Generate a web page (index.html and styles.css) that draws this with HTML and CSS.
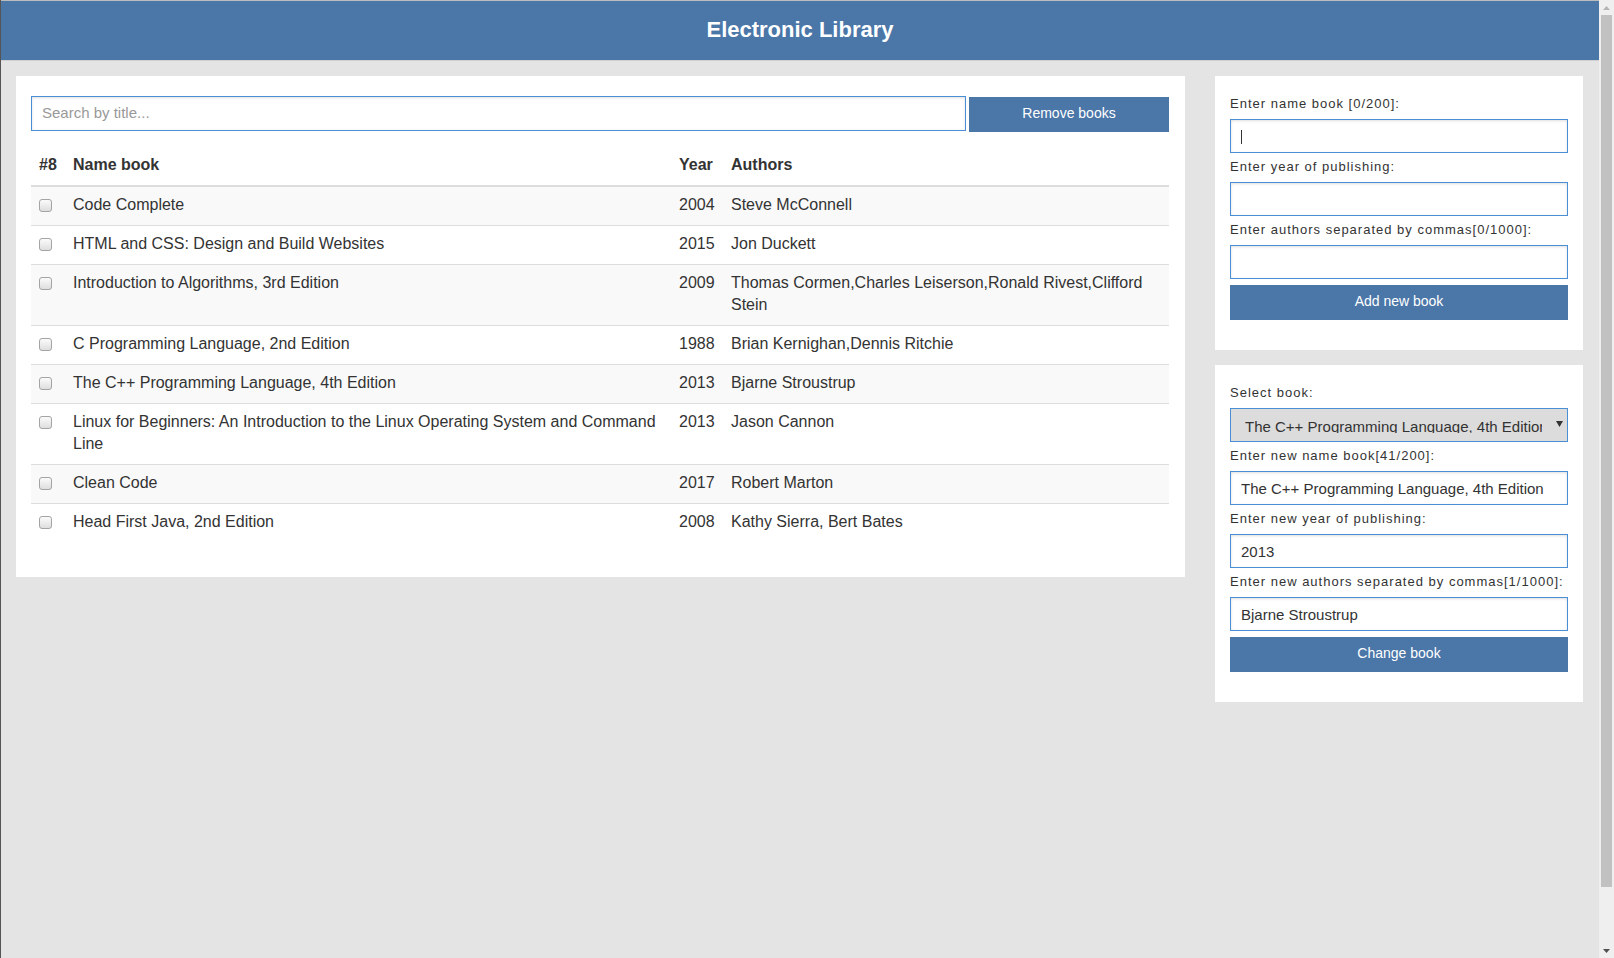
FILE: index.html
```html
<!DOCTYPE html>
<html lang="en">
<head>
<meta charset="utf-8">
<title>Electronic Library</title>
<link rel="stylesheet" href="styles.css">
</head>
<body>
<div class="app">
  <div class="page">
    <header class="topbar">
      <h1 class="title">Electronic Library</h1>
    </header>
    <main class="main">
      <section class="card books">
        <div class="search-row">
          <input class="field search" type="text" placeholder="Search by title...">
          <button class="btn remove" type="button">Remove books</button>
        </div>
        <table class="table">
          <colgroup>
            <col class="c-check">
            <col class="c-name">
            <col class="c-year">
            <col>
          </colgroup>
          <thead>
            <tr><th>#8</th><th>Name book</th><th>Year</th><th>Authors</th></tr>
          </thead>
          <tbody>
            <tr><td><input class="check" type="checkbox"></td><td>Code Complete</td><td>2004</td><td>Steve McConnell</td></tr>
            <tr><td><input class="check" type="checkbox"></td><td>HTML and CSS: Design and Build Websites</td><td>2015</td><td>Jon Duckett</td></tr>
            <tr><td><input class="check" type="checkbox"></td><td>Introduction to Algorithms, 3rd Edition</td><td>2009</td><td>Thomas Cormen,Charles Leiserson,Ronald Rivest,Clifford Stein</td></tr>
            <tr><td><input class="check" type="checkbox"></td><td>C Programming Language, 2nd Edition</td><td>1988</td><td>Brian Kernighan,Dennis Ritchie</td></tr>
            <tr><td><input class="check" type="checkbox"></td><td>The C++ Programming Language, 4th Edition</td><td>2013</td><td>Bjarne Stroustrup</td></tr>
            <tr><td><input class="check" type="checkbox"></td><td>Linux for Beginners: An Introduction to the Linux Operating System and Command Line</td><td>2013</td><td>Jason Cannon</td></tr>
            <tr><td><input class="check" type="checkbox"></td><td>Clean Code</td><td>2017</td><td>Robert Marton</td></tr>
            <tr><td><input class="check" type="checkbox"></td><td>Head First Java, 2nd Edition</td><td>2008</td><td>Kathy Sierra, Bert Bates</td></tr>
          </tbody>
        </table>
      </section>

      <aside class="side">
        <form class="card form">
          <label class="label">Enter name book [0/200]:</label>
          <span class="caret-wrap">
            <input class="field" type="text">
            <span class="caret"></span>
          </span>
          <label class="label">Enter year of publishing:</label>
          <input class="field" type="text">
          <label class="label">Enter authors separated by commas[0/1000]:</label>
          <input class="field" type="text">
          <button class="btn wide" type="button">Add new book</button>
        </form>

        <form class="card form">
          <label class="label">Select book:</label>
          <div class="select">
            <span class="select-text">The C++ Programming Language, 4th Edition</span>
            <svg class="select-arrow" viewBox="0 0 7 6" width="7" height="6"><polygon points="0,0 7,0 3.5,6" fill="#333"/></svg>
          </div>
          <label class="label">Enter new name book[41/200]:</label>
          <input class="field" type="text" value="The C++ Programming Language, 4th Edition">
          <label class="label">Enter new year of publishing:</label>
          <input class="field" type="text" value="2013">
          <label class="label">Enter new authors separated by commas[1/1000]:</label>
          <input class="field" type="text" value="Bjarne Stroustrup">
          <button class="btn wide" type="button">Change book</button>
        </form>
      </aside>
    </main>
  </div>

  <div class="scrollbar">
    <div class="sb-btn">
      <svg viewBox="0 0 7 4" width="7" height="4"><polygon points="0,4 7,4 3.5,0" fill="#b4b4b4"/></svg>
    </div>
    <div class="sb-track"><div class="sb-thumb"></div></div>
    <div class="sb-btn">
      <svg viewBox="0 0 7 4" width="7" height="4"><polygon points="0,0 7,0 3.5,4" fill="#505050"/></svg>
    </div>
  </div>
</div>
</body>
</html>
```

FILE: styles.css
```css
html, body {
  margin: 0;
  height: 100%;
  overflow: hidden;
}

body {
  font-family: "Liberation Sans", Arial, sans-serif;
  color: #333;
  background: #e4e4e4;
}

.app {
  display: flex;
  height: 100vh;
  border-left: 1px solid #555;
}

.page {
  flex: 1;
  min-width: 0;
  overflow: hidden;
  background: #e4e4e4;
}

/* header */
.topbar {
  height: 57px;
  padding-bottom: 2px;
  border-top: 1px solid #bcbcbc;
  border-bottom: 1px solid #d0d0d0;
  background: #4a76a8;
  display: flex;
  align-items: center;
  justify-content: center;
}

.title {
  margin: 0;
  font-size: 22px;
  line-height: 22px;
  font-weight: bold;
  color: #fff;
}

/* layout */
.main {
  display: grid;
  grid-template-columns: minmax(0, 1fr) 368px;
  column-gap: 30px;
  align-items: start;
  padding: 15px 16px 15px 15px;
}

.card {
  background: #fff;
}

.books {
  padding: 20px 16px 15px 15px;
}

.search-row {
  display: flex;
  align-items: flex-start;
  gap: 3px;
  margin-bottom: 15px;
}

.field {
  box-sizing: border-box;
  display: block;
  width: 100%;
  height: 34px;
  margin: 0;
  padding: 0 10px;
  border: 1px solid #4a8fd6;
  border-radius: 0;
  box-shadow: inset 0 1px 3px rgba(0, 0, 0, 0.13);
  background: #fff;
  font-family: "Liberation Sans", Arial, sans-serif;
  font-size: 15px;
  color: #333;
  outline: none;
}

.field::placeholder {
  color: #999;
}

.search {
  flex: 1;
  min-width: 0;
  height: 35px;
  padding-bottom: 2px;
}

.btn {
  display: block;
  box-sizing: border-box;
  height: 35px;
  margin: 0;
  padding: 0 0 3px;
  border: 0;
  border-radius: 0;
  background: #4a76a8;
  color: #fff;
  font-family: "Liberation Sans", Arial, sans-serif;
  font-size: 14px;
  cursor: pointer;
}

.remove {
  width: 200px;
  flex: none;
  margin-top: 1px;
}

/* table */
.table {
  width: 100%;
  margin-bottom: 20px;
  border-collapse: collapse;
  table-layout: fixed;
  font-size: 16px;
  line-height: 22px;
}

.c-check { width: 34px; }
.c-name { width: 606px; }
.c-year { width: 52px; }

.table th,
.table td {
  padding: 7px 8px 9px;
  text-align: left;
  vertical-align: top;
  border-top: 1px solid #ddd;
}

.table thead th {
  border-top: 0;
  border-bottom: 2px solid #ddd;
  font-weight: bold;
}

.table tbody tr:nth-child(odd) {
  background: #f9f9f9;
}

.check {
  -webkit-appearance: none;
  appearance: none;
  display: block;
  box-sizing: border-box;
  width: 13px;
  height: 13px;
  margin: 5px 0 0;
  border: 1px solid #a4a4a4;
  border-radius: 3px;
  background: linear-gradient(#fbfbfb, #dedede);
}

/* side forms */
.side {
  display: flex;
  flex-direction: column;
  gap: 15px;
}

.form {
  display: flex;
  flex-direction: column;
  padding: 14px 15px 15px;
}

.label {
  display: block;
  margin: 4px 0 6px;
  font-size: 13px;
  line-height: 19px;
  letter-spacing: 1px;
  color: #333;
}

.wide {
  width: 100%;
  margin: 6px 0 15px;
}

.caret-wrap {
  position: relative;
  display: block;
}

.caret {
  position: absolute;
  left: 11px;
  top: 11px;
  width: 1px;
  height: 14px;
  background: #333;
}

.select {
  box-sizing: border-box;
  display: flex;
  align-items: flex-start;
  height: 34px;
  padding: 8px 4px 0 14px;
  border: 1px solid #4a8fd6;
  background: #dcdcdc;
  font-size: 15px;
  color: #333;
}

.select-text {
  flex: 1;
  min-width: 0;
  height: 16px;
  line-height: 20px;
  overflow: hidden;
  white-space: nowrap;
}

.select-arrow {
  flex: none;
  margin: 4px 0 0 14px;
}

/* scrollbar */
.scrollbar {
  flex: none;
  width: 15px;
  display: flex;
  flex-direction: column;
  background: #efefef;
}

.sb-btn {
  height: 15px;
  flex: none;
  display: flex;
  align-items: center;
  justify-content: center;
}

.sb-track {
  flex: 1;
  padding: 0 2px;
}

.sb-thumb {
  height: 872px;
  background: #c1c1c1;
}
```
